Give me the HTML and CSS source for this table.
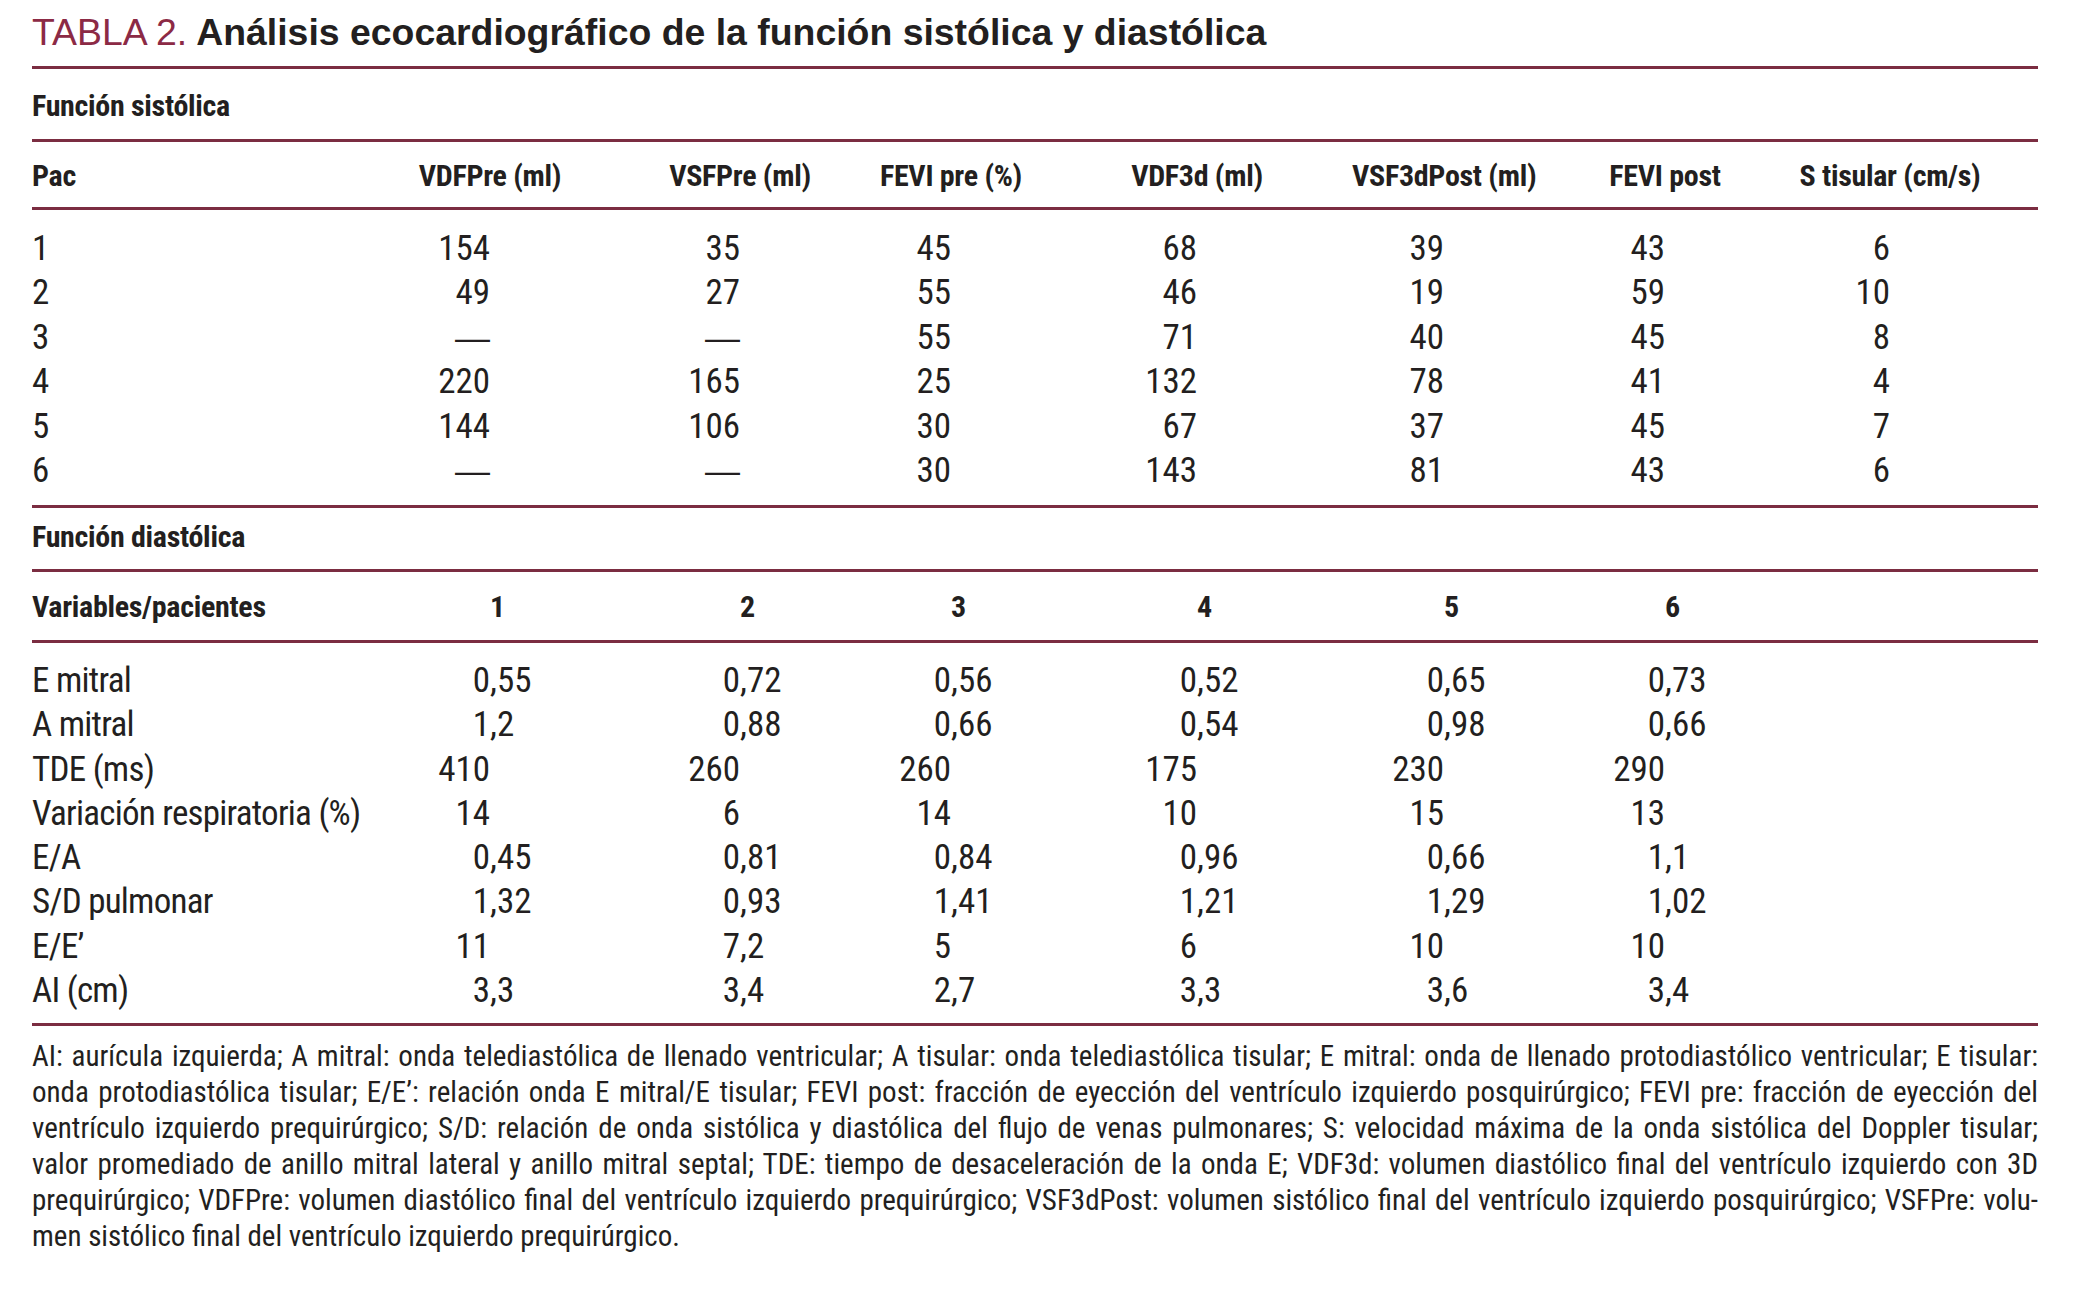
FILE: index.html
```html
<!DOCTYPE html>
<html lang="es">
<head>
<meta charset="utf-8">
<title>Tabla 2</title>
<link rel="stylesheet" href="styles.css">
</head>
<body>
<div class="page">
  <h1 class="title"><span class="tag">TABLA 2.</span> Análisis ecocardiográfico de la función sistólica y diastólica</h1>

  <div class="sec sec-sys">Función sistólica</div>

  <div class="row head head-sys">
    <div class="lab">Pac</div>
    <div class="h">VDFPre (ml)</div>
    <div class="h">VSFPre (ml)</div>
    <div class="h">FEVI pre (%)</div>
    <div class="h">VDF3d (ml)</div>
    <div class="h">VSF3dPost (ml)</div>
    <div class="h">FEVI post</div>
    <div class="h">S tisular (cm/s)</div>
  </div>

  <div class="body body-sys">
    <div class="row data"><div class="lab">1</div><div class="c"><span class="a">154</span><span class="b"></span></div><div class="c"><span class="a">35</span><span class="b"></span></div><div class="c"><span class="a">45</span><span class="b"></span></div><div class="c"><span class="a">68</span><span class="b"></span></div><div class="c"><span class="a">39</span><span class="b"></span></div><div class="c"><span class="a">43</span><span class="b"></span></div><div class="c"><span class="a">6</span><span class="b"></span></div></div>
    <div class="row data"><div class="lab">2</div><div class="c"><span class="a">49</span><span class="b"></span></div><div class="c"><span class="a">27</span><span class="b"></span></div><div class="c"><span class="a">55</span><span class="b"></span></div><div class="c"><span class="a">46</span><span class="b"></span></div><div class="c"><span class="a">19</span><span class="b"></span></div><div class="c"><span class="a">59</span><span class="b"></span></div><div class="c"><span class="a">10</span><span class="b"></span></div></div>
    <div class="row data"><div class="lab">3</div><div class="c"><span class="a dash">—</span><span class="b"></span></div><div class="c"><span class="a dash">—</span><span class="b"></span></div><div class="c"><span class="a">55</span><span class="b"></span></div><div class="c"><span class="a">71</span><span class="b"></span></div><div class="c"><span class="a">40</span><span class="b"></span></div><div class="c"><span class="a">45</span><span class="b"></span></div><div class="c"><span class="a">8</span><span class="b"></span></div></div>
    <div class="row data"><div class="lab">4</div><div class="c"><span class="a">220</span><span class="b"></span></div><div class="c"><span class="a">165</span><span class="b"></span></div><div class="c"><span class="a">25</span><span class="b"></span></div><div class="c"><span class="a">132</span><span class="b"></span></div><div class="c"><span class="a">78</span><span class="b"></span></div><div class="c"><span class="a">41</span><span class="b"></span></div><div class="c"><span class="a">4</span><span class="b"></span></div></div>
    <div class="row data"><div class="lab">5</div><div class="c"><span class="a">144</span><span class="b"></span></div><div class="c"><span class="a">106</span><span class="b"></span></div><div class="c"><span class="a">30</span><span class="b"></span></div><div class="c"><span class="a">67</span><span class="b"></span></div><div class="c"><span class="a">37</span><span class="b"></span></div><div class="c"><span class="a">45</span><span class="b"></span></div><div class="c"><span class="a">7</span><span class="b"></span></div></div>
    <div class="row data"><div class="lab">6</div><div class="c"><span class="a dash">—</span><span class="b"></span></div><div class="c"><span class="a dash">—</span><span class="b"></span></div><div class="c"><span class="a">30</span><span class="b"></span></div><div class="c"><span class="a">143</span><span class="b"></span></div><div class="c"><span class="a">81</span><span class="b"></span></div><div class="c"><span class="a">43</span><span class="b"></span></div><div class="c"><span class="a">6</span><span class="b"></span></div></div>
  </div>

  <div class="sec sec-dia">Función diastólica</div>

  <div class="row head head-dia">
    <div class="lab">Variables/pacientes</div>
    <div class="c"><span class="a"></span><span class="b">1</span></div>
    <div class="c"><span class="a"></span><span class="b">2</span></div>
    <div class="c"><span class="a"></span><span class="b">3</span></div>
    <div class="c"><span class="a"></span><span class="b">4</span></div>
    <div class="c"><span class="a"></span><span class="b">5</span></div>
    <div class="c"><span class="a"></span><span class="b">6</span></div>
  </div>

  <div class="body body-dia">
    <div class="row data"><div class="lab">E mitral</div><div class="c"><span class="a">0</span><span class="b">,55</span></div><div class="c"><span class="a">0</span><span class="b">,72</span></div><div class="c"><span class="a">0</span><span class="b">,56</span></div><div class="c"><span class="a">0</span><span class="b">,52</span></div><div class="c"><span class="a">0</span><span class="b">,65</span></div><div class="c"><span class="a">0</span><span class="b">,73</span></div></div>
    <div class="row data"><div class="lab">A mitral</div><div class="c"><span class="a">1</span><span class="b">,2</span></div><div class="c"><span class="a">0</span><span class="b">,88</span></div><div class="c"><span class="a">0</span><span class="b">,66</span></div><div class="c"><span class="a">0</span><span class="b">,54</span></div><div class="c"><span class="a">0</span><span class="b">,98</span></div><div class="c"><span class="a">0</span><span class="b">,66</span></div></div>
    <div class="row data"><div class="lab">TDE (ms)</div><div class="c"><span class="a">410</span><span class="b"></span></div><div class="c"><span class="a">260</span><span class="b"></span></div><div class="c"><span class="a">260</span><span class="b"></span></div><div class="c"><span class="a">175</span><span class="b"></span></div><div class="c"><span class="a">230</span><span class="b"></span></div><div class="c"><span class="a">290</span><span class="b"></span></div></div>
    <div class="row data"><div class="lab">Variación respiratoria (%)</div><div class="c"><span class="a">14</span><span class="b"></span></div><div class="c"><span class="a">6</span><span class="b"></span></div><div class="c"><span class="a">14</span><span class="b"></span></div><div class="c"><span class="a">10</span><span class="b"></span></div><div class="c"><span class="a">15</span><span class="b"></span></div><div class="c"><span class="a">13</span><span class="b"></span></div></div>
    <div class="row data"><div class="lab">E/A</div><div class="c"><span class="a">0</span><span class="b">,45</span></div><div class="c"><span class="a">0</span><span class="b">,81</span></div><div class="c"><span class="a">0</span><span class="b">,84</span></div><div class="c"><span class="a">0</span><span class="b">,96</span></div><div class="c"><span class="a">0</span><span class="b">,66</span></div><div class="c"><span class="a">1</span><span class="b">,1</span></div></div>
    <div class="row data"><div class="lab">S/D pulmonar</div><div class="c"><span class="a">1</span><span class="b">,32</span></div><div class="c"><span class="a">0</span><span class="b">,93</span></div><div class="c"><span class="a">1</span><span class="b">,41</span></div><div class="c"><span class="a">1</span><span class="b">,21</span></div><div class="c"><span class="a">1</span><span class="b">,29</span></div><div class="c"><span class="a">1</span><span class="b">,02</span></div></div>
    <div class="row data"><div class="lab">E/E’</div><div class="c"><span class="a">11</span><span class="b"></span></div><div class="c"><span class="a">7</span><span class="b">,2</span></div><div class="c"><span class="a">5</span><span class="b"></span></div><div class="c"><span class="a">6</span><span class="b"></span></div><div class="c"><span class="a">10</span><span class="b"></span></div><div class="c"><span class="a">10</span><span class="b"></span></div></div>
    <div class="row data"><div class="lab">AI (cm)</div><div class="c"><span class="a">3</span><span class="b">,3</span></div><div class="c"><span class="a">3</span><span class="b">,4</span></div><div class="c"><span class="a">2</span><span class="b">,7</span></div><div class="c"><span class="a">3</span><span class="b">,3</span></div><div class="c"><span class="a">3</span><span class="b">,6</span></div><div class="c"><span class="a">3</span><span class="b">,4</span></div></div>
  </div>

  <p class="notes">
    <span class="ln">AI: aurícula izquierda; A mitral: onda telediastólica de llenado ventricular; A tisular: onda telediastólica tisular; E mitral: onda de llenado protodiastólico ventricular; E tisular:</span>
    <span class="ln">onda protodiastólica tisular; E/E’: relación onda E mitral/E tisular; FEVI post: fracción de eyección del ventrículo izquierdo posquirúrgico; FEVI pre: fracción de eyección del</span>
    <span class="ln">ventrículo izquierdo prequirúrgico; S/D: relación de onda sistólica y diastólica del flujo de venas pulmonares; S: velocidad máxima de la onda sistólica del Doppler tisular;</span>
    <span class="ln">valor promediado de anillo mitral lateral y anillo mitral septal; TDE: tiempo de desaceleración de la onda E; VDF3d: volumen diastólico final del ventrículo izquierdo con 3D</span>
    <span class="ln">prequirúrgico; VDFPre: volumen diastólico final del ventrículo izquierdo prequirúrgico; VSF3dPost: volumen sistólico final del ventrículo izquierdo posquirúrgico; VSFPre: volu-</span>
    <span class="ln last">men sistólico final del ventrículo izquierdo prequirúrgico.</span>
  </p>
</div>
</body>
</html>
```

FILE: styles.css
```css
* {
  box-sizing: border-box;
}

html,
body {
  margin: 0;
  background: #ffffff;
}

body {
  color: #231f20;
  font-family: "Roboto", "Liberation Sans", sans-serif;
  font-stretch: 75%;
}

.page {
  width: 2038px;
  padding-left: 32px;
}

.title {
  margin: 0;
  height: 69px;
  padding-top: 12px;
  font-family: "Liberation Sans", Arial, sans-serif;
  font-stretch: 100%;
  font-size: 37.4px;
  line-height: 40px;
  font-weight: 700;
  white-space: nowrap;
  border-bottom: 3px solid #7b2d41;
}

.title .tag {
  font-weight: 400;
  color: #8c2a45;
}

.sec {
  font-size: 30px;
  font-weight: 700;
  letter-spacing: -0.3px;
  border-bottom: 3px solid #7b2d41;
}

.sec-sys {
  height: 73px;
  padding-top: 4px;
  line-height: 66px;
}

.sec-dia {
  height: 64px;
  line-height: 58px;
}

.row {
  display: grid;
  grid-template-columns: 328px 260px 240px 182px 310px 184px 258px 192px 1fr;
  white-space: nowrap;
}

.head {
  font-size: 30px;
  font-weight: 700;
  letter-spacing: -0.3px;
  border-bottom: 3px solid #7b2d41;
}

.head-sys {
  height: 68px;
  padding-top: 2px;
  line-height: 63px;
}

.head-dia {
  height: 71px;
  padding-top: 2px;
  line-height: 66px;
}

.h {
  text-align: center;
}

.c {
  display: flex;
}

.c .a,
.c .b {
  flex: 1 1 0;
}

.c .a {
  text-align: right;
}

.c .b {
  text-align: left;
}

.c .dash {
  font-family: "Liberation Sans", Arial, sans-serif;
  font-stretch: 100%;
}

.body {
  border-bottom: 3px solid #7b2d41;
}

.body-sys {
  padding-top: 17px;
  padding-bottom: 11.6px;
}

.body-dia {
  padding-top: 16px;
  padding-bottom: 9.6px;
}

.data {
  font-size: 35px;
  line-height: 44.4px;
  height: 44.4px;
}

.data .lab {
  letter-spacing: -0.75px;
}

.body-dia .data {
  line-height: 44.3px;
  height: 44.3px;
}

.notes {
  margin: 0;
  padding-top: 12px;
  font-size: 29px;
  line-height: 36px;
  text-align: justify;
}

.ln {
  display: block;
  text-align-last: justify;
}

.ln.last {
  text-align-last: left;
}
```
